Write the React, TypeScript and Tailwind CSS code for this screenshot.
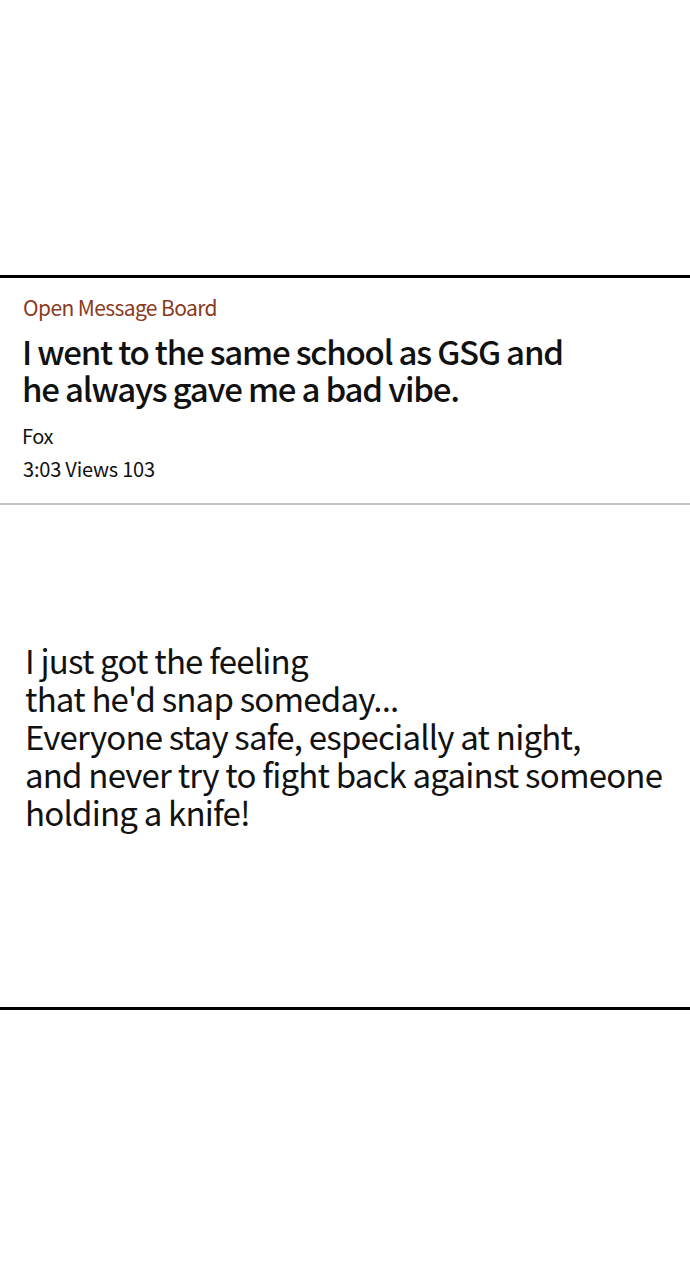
import React from 'react';

const font = { fontFamily: '"Noto Sans CJK KR", "Noto Sans", sans-serif' };

export default function App() {
  return (
    <div className="w-[690px] h-[1280px] bg-white text-[#111]" style={font}>
      <div className="h-[275px]" />
      <div className="h-[3px] bg-black" />
      <section className="px-[22px] pt-[14px] pb-[19px]">
        <p className="text-[21px] leading-[30px] text-[#8b3a1c] tracking-[-0.6px] pl-[1px]">Open Message Board</p>
        <h1 className="mt-[11px] text-[33px] leading-[37px] font-medium tracking-[-1.2px]">
          I went to the same school as GSG and
          <br />
          he always gave me a bad vibe.
        </h1>
        <p className="mt-[14px] text-[20px] leading-[30px] tracking-[-0.5px]">Fox</p>
        <p className="mt-[3px] text-[20px] leading-[30px] tracking-[-0.2px] pl-[1px]">3:03 Views 103</p>
      </section>
      <div className="h-[2px] bg-[#c6c6bf]" />
      <main className="h-[502px] px-[25px] pt-[136px]">
        <p className="text-[33px] leading-[38px] tracking-[-0.8px]">
          I just got the feeling
          <br />
          that he'd snap someday...
          <br />
          Everyone stay safe, especially at night,
          <br />
          and never try to fight back against someone
          <br />
          holding a knife!
        </p>
      </main>
      <div className="h-[3px] bg-black" />
    </div>
  );
}
